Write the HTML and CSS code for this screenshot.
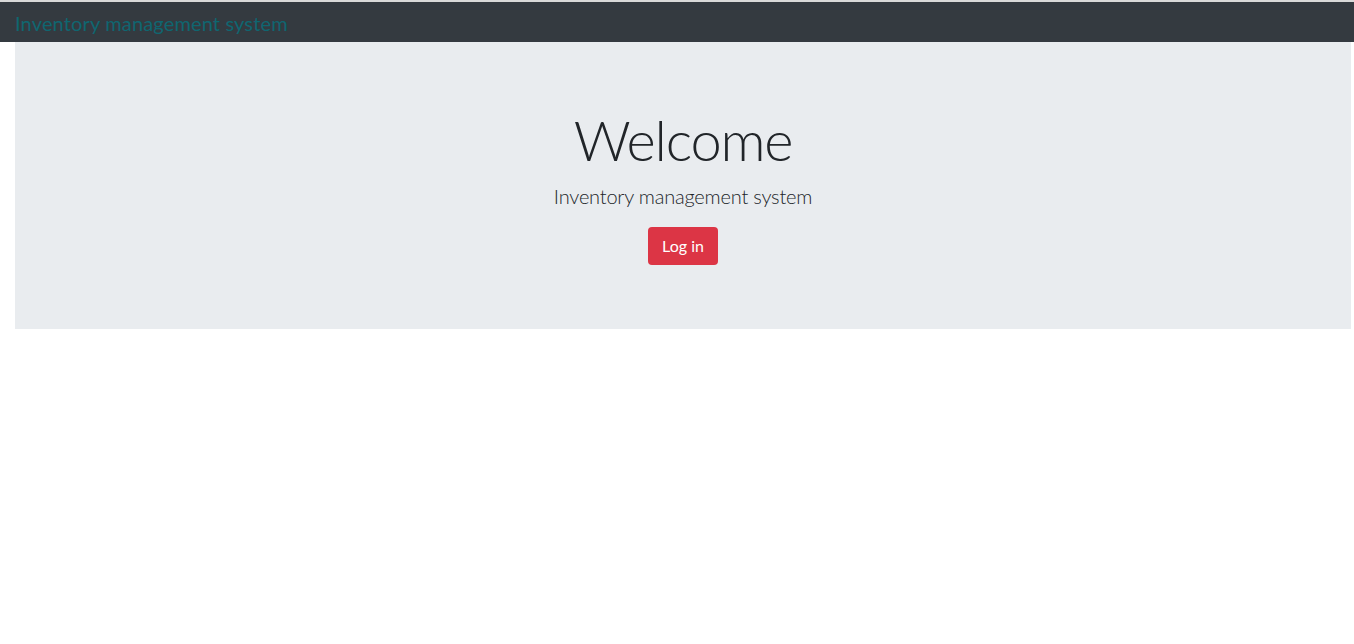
FILE: index.html
```html
<!DOCTYPE html>
<html lang="en">
<head>
<meta charset="utf-8">
<title>Inventory management system</title>
<link rel="stylesheet" href="styles.css">
</head>
<body>
<div class="topline"></div>
<nav class="navbar">
  <a class="brand" href="#">Inventory management system</a>
</nav>
<main class="container">
  <section class="jumbotron">
    <h1 class="display">Welcome</h1>
    <p class="lead">Inventory management system</p>
    <a class="btn-danger" href="#">Log in</a>
  </section>
</main>
</body>
</html>
```
FILE: styles.css
```css
html, body {
  margin: 0;
  padding: 0;
  background: #fff;
}
body {
  font-family: Lato, "Open Sans", sans-serif;
  color: #212529;
}
.topline {
  height: 2px;
  background: #d9d9d9;
}
.navbar {
  height: 40px;
  background: #343a40;
  display: flex;
  align-items: center;
  padding: 0 15px;
}
.brand {
  color: #0f6670;
  font-size: 20px;
  font-weight: 400;
  letter-spacing: 0.15px;
  text-decoration: none;
  line-height: 1;
  position: relative;
  top: 1px;
}
.container {
  padding: 0 3px 0 15px;
}
.jumbotron {
  background: #e9ecef;
  padding: 64px 32px;
  display: flex;
  flex-direction: column;
  align-items: center;
}
.display {
  font-size: 56px;
  font-weight: 300;
  line-height: 1.2;
  letter-spacing: -1.2px;
  margin: 0 0 8px;
  color: #212529;
}
.lead {
  font-size: 20px;
  font-weight: 300;
  line-height: 1.5;
  letter-spacing: -0.2px;
  margin: 0 0 16px;
  color: #212529;
}
.btn-danger {
  display: inline-block;
  height: 38px;
  box-sizing: border-box;
  padding: 0 14px;
  line-height: 38px;
  font-size: 16px;
  color: #fff;
  background: #dc3545;
  border-radius: 4px;
  text-decoration: none;
}
```
